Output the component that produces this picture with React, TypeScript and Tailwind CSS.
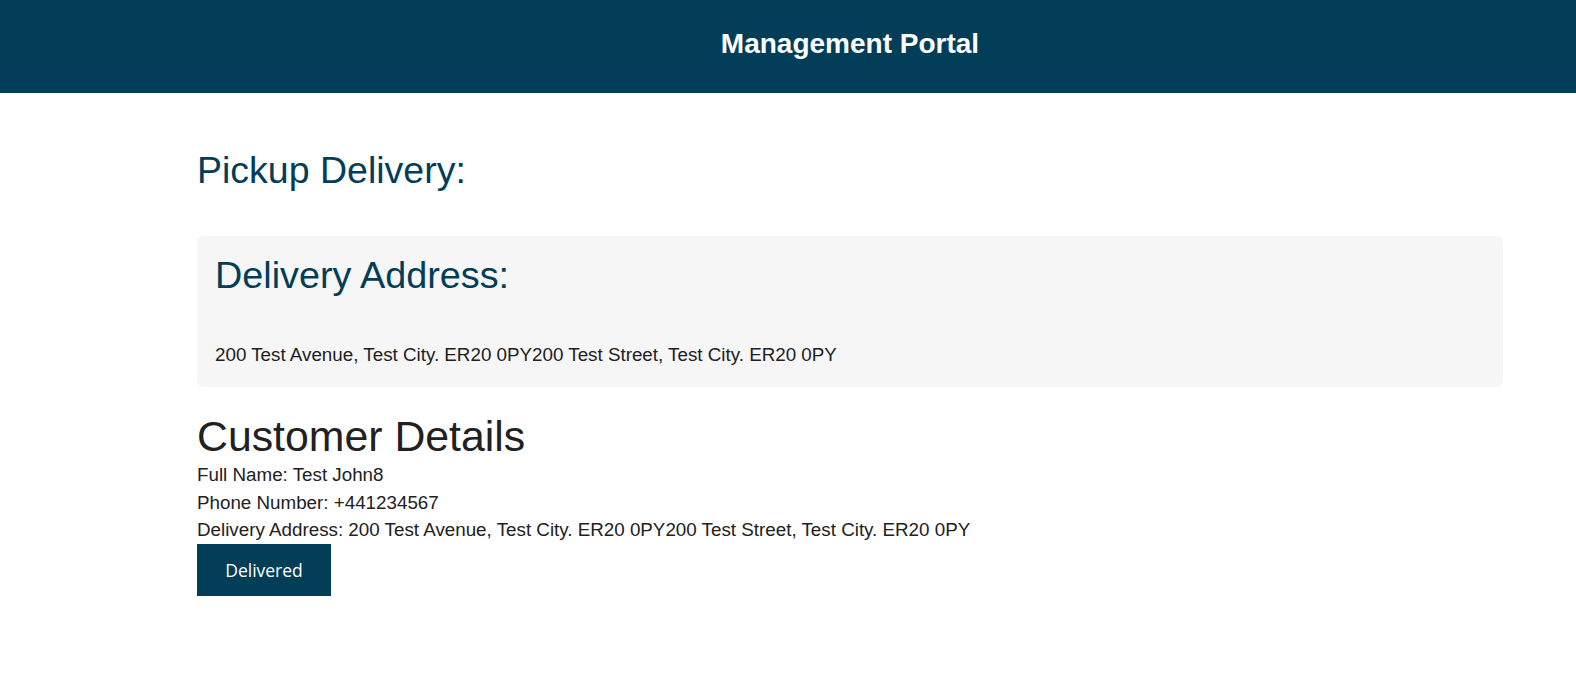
import * as React from 'react';

const address = '200 Test Avenue, Test City. ER20 0PY200 Test Street, Test City. ER20 0PY';

const App: React.FC = () => {
  return (
    <div className="min-h-screen bg-white font-['Liberation_Sans',Arial,sans-serif] text-[#212121]">
      <header className="h-[93px] bg-[#023e58] flex items-center justify-center pl-[197px] pr-[73px] pb-[5px]">
        <h1 className="text-white text-[28px] font-bold leading-none">Management Portal</h1>
      </header>
      <main className="pl-[197px] pr-[73px]">
        <h2 className="mt-[55px] text-[37.5px] leading-[1.2] text-[#023e58]">Pickup Delivery:</h2>
        <div className="mt-[43px] bg-[#f6f6f6] rounded-md pt-[17px] pb-[18px] px-[18px]">
          <h3 className="text-[37.8px] leading-[1.2] text-[#023e58]">Delivery Address:</h3>
          <p className="mt-[43px] text-[18.8px] leading-[27.6px]">{address}</p>
        </div>
        <div className="mt-[24px]">
          <h2 className="text-[42.8px] leading-[50px]">Customer Details</h2>
          <p className="text-[18.8px] leading-[27.6px]">Full Name: Test John8</p>
          <p className="text-[18.8px] leading-[27.6px]">Phone Number: +441234567</p>
          <p className="text-[18.8px] leading-[27.6px]">Delivery Address: {address}</p>
          <button
            type="button"
            className="w-[134px] h-[52px] bg-[#023e58] text-white text-[17.5px] font-['Open_Sans',sans-serif]"
          >
            Delivered
          </button>
        </div>
      </main>
    </div>
  );
};

export default App;
